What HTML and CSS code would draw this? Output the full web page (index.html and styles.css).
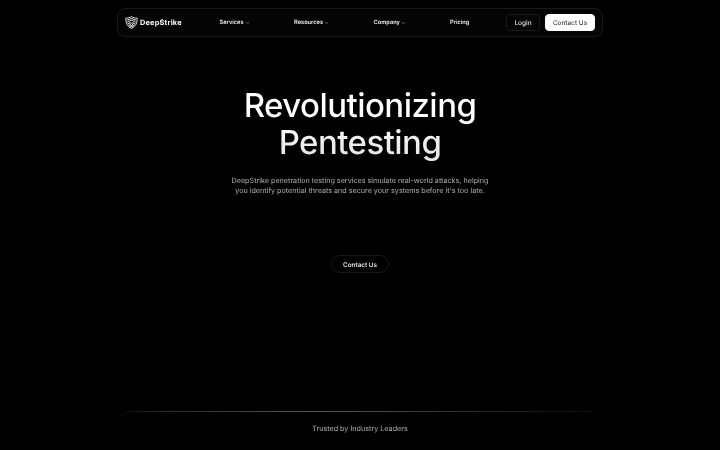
FILE: index.html
```html
<!DOCTYPE html>
<html lang="en">
<head>
<meta charset="utf-8">
<title>DeepStrike</title>
<link rel="stylesheet" href="styles.css">
</head>
<body>
<header class="navbar">
  <a class="brand">
    <svg class="shield" viewBox="0 0 26 26" fill="none" stroke="currentColor" stroke-width="2">
      <path d="M13 1.2C9.8 3.6 6 4.2 1.8 4.2 1.4 13.5 4.2 20.8 13 24.8 21.8 20.8 24.6 13.5 24.2 4.2 20 4.2 16.2 3.6 13 1.2Z"/>
      <path d="M4.5 7.4C8 7.2 10.8 6.3 13 4.8 15.2 6.3 18 7.2 21.5 7.4M4.6 10.8C8.2 10.5 10.8 9.7 13 8.2 15.2 9.7 17.8 10.5 21.4 10.8M5 13.8 10.5 16.2 13 21.5 15.5 16.2 21 13.8M6.5 17.8 9.5 19.2 11.5 22.5M19.5 17.8 16.5 19.2 14.5 22.5M8.5 12.3 13 14.8 17.5 12.3"/>
    </svg>
    <span class="wordmark">DeepStrike</span>
  </a>
  <nav class="links">
    <a>Services <svg class="chevron" viewBox="0 0 6 4"><path d="M1 1l2 1.6L5 1"/></svg></a>
    <a>Resources <svg class="chevron" viewBox="0 0 6 4"><path d="M1 1l2 1.6L5 1"/></svg></a>
    <a>Company <svg class="chevron" viewBox="0 0 6 4"><path d="M1 1l2 1.6L5 1"/></svg></a>
    <a>Pricing</a>
  </nav>
  <div class="actions">
    <a class="button"><span>Login</span></a>
    <a class="button primary"><span>Contact Us</span></a>
  </div>
</header>
<main class="hero">
  <h1>Revolutionizing<br>Pentesting</h1>
  <p>DeepStrike penetration testing services simulate real-world attacks, helping<br>you identify potential threats and secure your systems before it's too late.</p>
  <a class="cta">Contact Us</a>
</main>
<section class="trusted">
  <svg class="edge" viewBox="0 0 486 12" fill="none">
    <defs>
      <linearGradient id="rim" gradientUnits="userSpaceOnUse" x1="0" y1="0" x2="486" y2="0">
        <stop offset="0" stop-color="#0c0c0c"/>
        <stop offset=".1" stop-color="#2c2c2c"/>
        <stop offset=".4" stop-color="#555"/>
        <stop offset=".6" stop-color="#404040"/>
        <stop offset=".85" stop-color="#1c1c1c"/>
        <stop offset="1" stop-color="#0c0c0c"/>
      </linearGradient>
    </defs>
    <path d="M3 8Q7 1.5 13 1.5H472Q479 1.5 482 9" stroke="url(#rim)"/>
  </svg>
  <h2>Trusted by Industry Leaders</h2>
</section>
</body>
</html>
```

FILE: styles.css
```css
* { box-sizing: border-box; }

body {
  margin: 0;
  height: 450px;
  padding-top: 8px;
  overflow: hidden;
  display: flex;
  flex-direction: column;
  align-items: center;
  background: #000;
  color: #fff;
  font-family: Inter, "Liberation Sans", sans-serif;
  text-rendering: geometricPrecision;
}

.brand, .links, .button span, .hero, .trusted { opacity: .999; will-change: opacity; }

.navbar {
  width: 486px;
  height: 29px;
  padding: 0 7px;
  display: grid;
  grid-template-columns: 94.5px 1fr auto;
  align-items: center;
  border: 1px solid #191919;
  border-radius: 8px;
  background: #040404;
}

.brand { display: flex; align-items: center; gap: 2px; }
.shield { width: 13px; height: 13px; color: #e4e4e4; }
.wordmark {
  font-size: 7.4px;
  font-weight: 700;
  line-height: 10px;
  letter-spacing: .18px;
}

.links {
  display: grid;
  grid-template-columns: 74.5px 79.5px 76.5px auto;
  padding-top: 1px;
  font-size: 5.7px;
  font-weight: 600;
  line-height: 10px;
  color: #eee;
}
.links a { display: flex; align-items: center; gap: 1px; }
.chevron {
  width: 5px;
  height: 4px;
  fill: none;
  stroke: #999;
  stroke-width: .7;
}

.actions { display: flex; gap: 5px; }
.button {
  width: 34px;
  height: 17px;
  display: flex;
  align-items: center;
  justify-content: center;
  border: 1px solid #1b1b1b;
  border-radius: 4px;
  font-size: 6.5px;
  font-weight: 500;
  color: #e4e4e4;
}
.button.primary {
  width: 50px;
  border-color: #fff;
  background: #fff;
  color: #222;
  font-weight: 400;
}

.hero {
  display: flex;
  flex-direction: column;
  align-items: center;
  text-align: center;
}
.hero h1 {
  margin: 50px 0 0;
  font-size: 33px;
  font-weight: 500;
  line-height: 37px;
  letter-spacing: -.54px;
  background: linear-gradient(#fff 40%, #e4e4e4);
  background-clip: text;
  color: transparent;
}
.hero p {
  margin: 15px 0 0;
  font-size: 7.2px;
  line-height: 10.2px;
  color: #b0b0b0;
  white-space: nowrap;
}
.cta {
  margin-top: 58.6px;
  width: 58px;
  height: 18px;
  display: flex;
  align-items: center;
  justify-content: center;
  border: 1px solid #1a1a1a;
  border-radius: 9px;
  font-size: 6.3px;
  font-weight: 600;
  color: #e4e4e4;
  padding-top: 1px;
}

.trusted {
  width: 486px;
  margin-top: auto;
  height: 40px;
  text-align: center;
}
.edge { display: block; width: 486px; height: 12px; }
.trusted h2 {
  margin: 2px 0 0;
  font-size: 7.2px;
  font-weight: 400;
  line-height: 10px;
  color: #b0b0b0;
}
```
